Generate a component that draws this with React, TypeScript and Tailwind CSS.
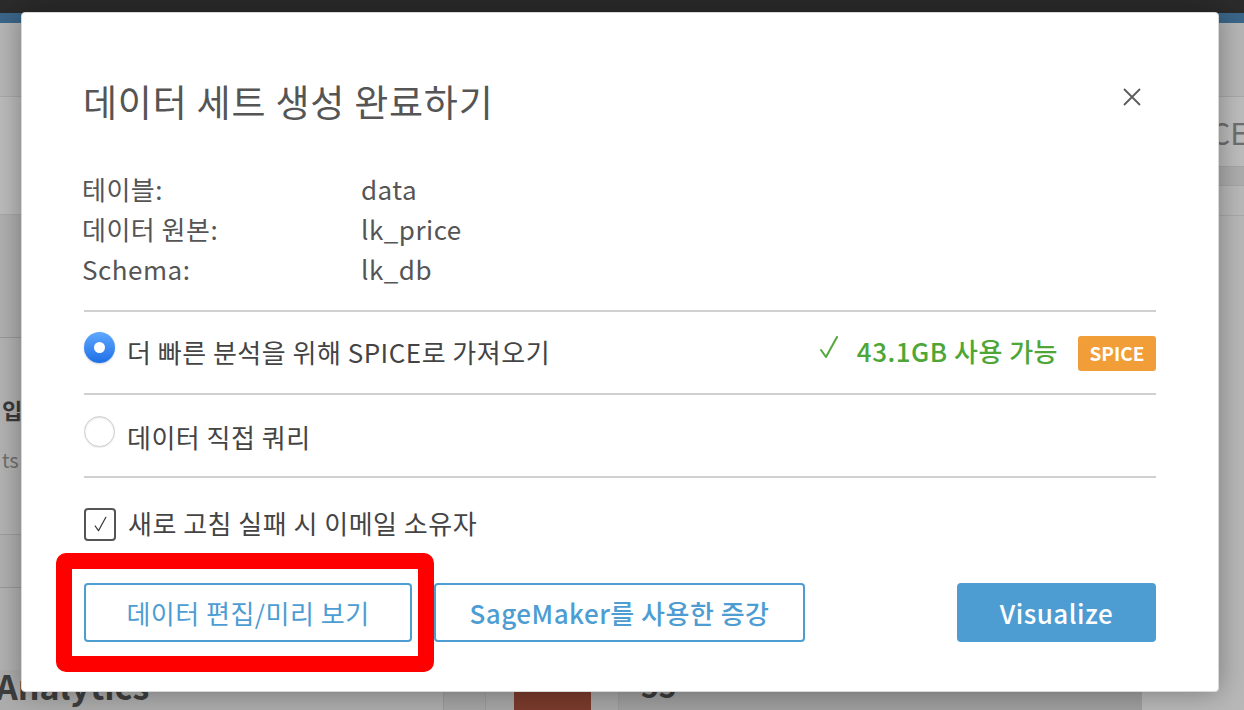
import React from "react";

const font = { fontFamily: '"Noto Sans CJK KR", "Noto Sans", sans-serif' };

function CheckIcon({ className, color, width = 2 }: { className?: string; color: string; width?: number }) {
  return (
    <svg className={className} viewBox="0 0 18 24" fill="none">
      <path d="M1 15 L6 22 L17 2" stroke={color} strokeWidth={width} strokeLinecap="round" strokeLinejoin="round" />
    </svg>
  );
}

export default function App() {
  return (
    <div className="relative w-[1244px] h-[710px] overflow-hidden bg-[#b4b4b4]" style={font}>
      {/* background page */}
      <div className="flex flex-col h-full">
        <div className="h-[13px] bg-[#2b2b2b]" />
        <div className="h-[10px] bg-[#3b6689]" />
        <div className="flex flex-1">
          <div className="w-[21px] flex flex-col">
            <div className="h-[74px] bg-[#b6b6b6] border-b border-[#a9a9a9]" />
            <div className="h-[118px] bg-[#bcbcbc] border-b border-[#a8a8a8]" />
            <div className="h-[123px] bg-[#b0b0b0] border-b border-[#9a9a9a]" />
            <div className="h-[197px] bg-[#b3b3b3] border-b border-[#9f9f9f] flex flex-col pl-[2px] overflow-hidden">
              <span className="text-[22px] font-bold text-[#3a3a3a] leading-none mt-[60px]">입</span>
              <span className="text-[20px] text-[#6f6f6f] leading-none mt-[30px]">ts</span>
            </div>
            <div className="h-[53px] bg-[#b0b0b0] border-b border-[#9a9a9a]" />
            <div className="flex-1 bg-[#b2b2b2]" />
          </div>
          <div className="flex-1 bg-[#a8a8a8]" />
          <div className="w-[25px] flex flex-col">
            <div className="h-[74px] bg-[#b6b6b6] border-b border-[#a8a8a8]" />
            <div className="h-[69px] bg-[#bdbdbd] flex items-center overflow-hidden">
              <span className="text-[30px] text-[#6e6e6e] ml-[-8px] leading-none">CE</span>
            </div>
            <div className="h-[20px] bg-[#adadad] border-y border-[#a6a6a6]" />
            <div className="h-[30px] bg-[#b9b9b9] border-b border-[#a9a9a9]" />
            <div className="flex-1 bg-[#b8b8b8]" />
          </div>
        </div>
        <div className="h-[40px] flex items-end bg-[#adadad]">
          <div className="w-[443px] h-full flex items-end overflow-hidden">
            <span className="text-[34px] font-bold text-[#3e3e3e] leading-none mb-[7px] ml-[-4px]">Analytics</span>
          </div>
          <div className="w-[42px] h-full border-l border-[#9a9a9a] bg-[#a4a4a4]" />
          <div className="w-[133px] h-full border-l border-[#9a9a9a] bg-[#a6a6a6] flex items-end">
            <div className="ml-[28px] w-[77px] h-[30px] bg-[#7a3b2c]" />
          </div>
          <div className="w-[524px] h-full border-l border-[#9a9a9a] bg-[#9f9f9f] flex items-end">
            <span className="ml-[22px] text-[30px] font-bold text-[#3a3a3a] leading-none mb-[10px]">55</span>
          </div>
          <div className="flex-1 h-full bg-[#b8b8b8]" />
        </div>
      </div>

      {/* modal */}
      <div className="absolute left-[21px] top-[12px] w-[1198px] h-[680px] bg-white rounded-[4px] border border-[#d8d8d8] shadow-[0_0_28px_rgba(0,0,0,0.35)]">
        <div className="flex flex-col px-[62px] pt-[68px]">
          <div className="flex items-center justify-between h-[40px]">
            <h1 className="text-[37px] text-[#555555] leading-none tracking-[0.8px] ml-[-1px]">데이터 세트 생성 완료하기</h1>
            <svg className="w-[18px] h-[18px] mr-[15px] mt-[-8px]" viewBox="0 0 18 18">
              <path d="M1 1 L17 17 M17 1 L1 17" stroke="#5a5a5a" strokeWidth="1.8" />
            </svg>
          </div>

          <div className="mt-[47px] flex flex-col text-[26px] tracking-[0.5px] text-[#555555]">
            {[
              ["테이블:", "data"],
              ["데이터 원본:", "lk_price"],
              ["Schema:", "lk_db"],
            ].map(([k, v]) => (
              <div key={k} className="flex items-center h-[40px] ml-[-2px]">
                <span className="w-[279px]">{k}</span>
                <span>{v}</span>
              </div>
            ))}
          </div>

          <div className="mt-[22px] h-[2px] bg-[#d0d0d0]" />

          <div className="h-[81px] flex items-center text-[26px] tracking-[0.5px] text-[#444444]">
            <div className="w-[31px] h-[31px] rounded-full bg-gradient-to-b from-[#5ea8ff] to-[#1d6fe6] flex items-center justify-center shadow-[0_1px_2px_rgba(0,0,0,0.2)] mt-[-10px]">
              <div className="w-[11px] h-[11px] rounded-full bg-white" />
            </div>
            <span className="ml-[12px] mt-[-3px]">더 빠른 분석을 위해 SPICE로 가져오기</span>
            <div className="ml-auto flex items-center mt-[-4px]">
              <CheckIcon className="w-[18px] h-[24px] mt-[-8px]" color="#52a83a" />
              <span className="ml-[19px] text-[#4ea636] font-medium">43.1GB 사용 가능</span>
              <span className="ml-[20px] mt-[6px] h-[35px] w-[78px] rounded-[3px] bg-[#f29e38] text-white font-bold text-[19px] tracking-normal flex items-center justify-center">SPICE</span>
            </div>
          </div>

          <div className="h-[2px] bg-[#d0d0d0]" />

          <div className="h-[81px] flex items-center text-[26px] tracking-[0.5px] text-[#444444]">
            <div className="w-[31px] h-[31px] rounded-full bg-white border border-[#cfcfcf] shadow-[inset_0_1px_2px_rgba(0,0,0,0.12),0_1px_1px_rgba(0,0,0,0.08)] mt-[-8px]" />
            <span className="ml-[12px] mt-[1px]">데이터 직접 쿼리</span>
          </div>

          <div className="h-[2px] bg-[#d0d0d0]" />

          <div className="mt-[28px] flex items-center text-[26px] tracking-[0.5px] text-[#444444]">
            <div className="w-[32px] h-[33px] rounded-[4px] border-2 border-[#555555] flex items-center justify-center">
              <CheckIcon className="w-[13px] h-[16px]" color="#333333" width={1.8} />
            </div>
            <span className="ml-[12px] mt-[-3px]">새로 고침 실패 시 이메일 소유자</span>
          </div>

          <div className="mt-[41px] flex items-center text-[26px] tracking-[0.5px]">
            <button className="w-[328px] h-[59px] rounded-[4px] border-2 border-[#4d9dd3] text-[#4d9dd3] bg-white">데이터 편집/미리 보기</button>
            <button className="ml-[22px] w-[371px] h-[59px] rounded-[4px] border-2 border-[#4d9dd3] text-[#4d9dd3] bg-white font-medium">SageMaker를 사용한 증강</button>
            <button className="ml-auto w-[199px] h-[59px] rounded-[4px] bg-[#4d9dd3] text-white font-medium">Visualize</button>
          </div>
        </div>

        {/* red highlight */}
        <div className="absolute left-[34px] top-[540px] w-[378px] h-[119px] border-[16px] border-[#ff0000] rounded-[10px]" />
      </div>
    </div>
  );
}
